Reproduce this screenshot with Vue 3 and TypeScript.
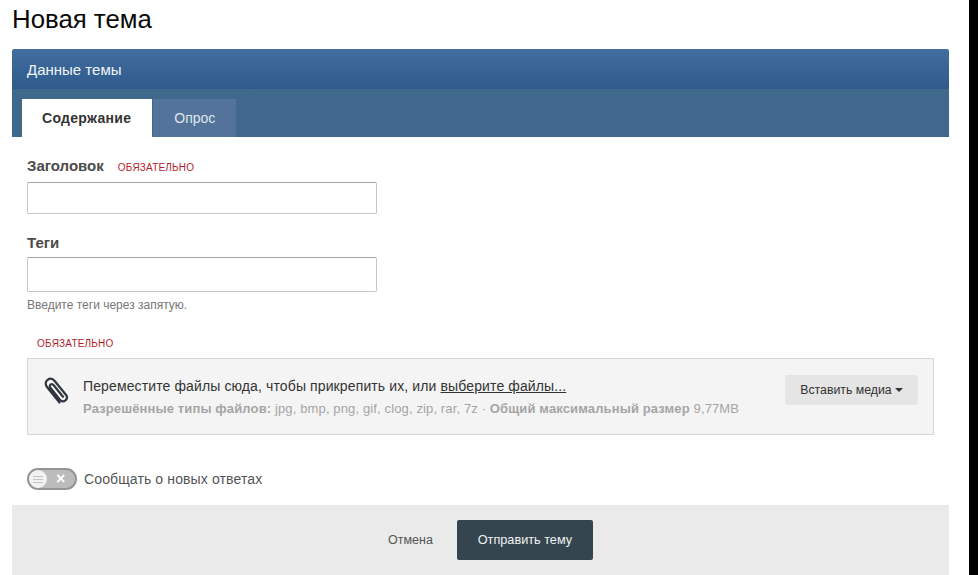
<script setup lang="ts">
const title = 'Новая тема'
</script>

<template>
  <div class="page">
    <div class="main">
      <h1 class="title">{{ title }}</h1>
      <section class="panel">
        <header class="panel-head">Данные темы</header>
        <nav class="tabs">
          <span class="tab active">Содержание</span>
          <span class="tab">Опрос</span>
        </nav>
        <div class="body">
          <div class="field first">
            <label class="label">Заголовок<span class="req">ОБЯЗАТЕЛЬНО</span></label>
            <input class="input" type="text" />
          </div>
          <div class="field second">
            <label class="label">Теги</label>
            <input class="input tall" type="text" />
            <p class="hint">Введите теги через запятую.</p>
          </div>
          <div class="req alone">ОБЯЗАТЕЛЬНО</div>
          <div class="attach">
            <svg class="clip" width="26" height="28" viewBox="0 0 26 28" fill="none" stroke="#2f3640" stroke-width="2.2" stroke-linecap="round" stroke-linejoin="round">
              <path d="M16.5 25.5 4.2 10.2C2 7.5 2.3 4.5 4.6 2.8 7 1 9.9 1.7 11.9 4.2l11 13.6c1.5 1.9 1.2 4.2-.5 5.6-1.8 1.4-4 1-5.500-.8L7.400 10.800C6.500 9.700 6.600 8.400 7.600 7.600c1-.8 2.200-.5 3.100.6l9.300 11.500" />
            </svg>
            <div class="attach-text">
              <div class="line1">Переместите файлы сюда, чтобы прикрепить их, или <a class="link">выберите файлы...</a></div>
              <div class="line2"><b>Разрешённые типы файлов:</b> jpg, bmp, png, gif, clog, zip, rar, 7z · <b>Общий максимальный размер</b> 9,77MB</div>
            </div>
            <span class="media">Вставить медиа<i class="caret"></i></span>
          </div>
          <div class="toggle-row">
            <span class="toggle">
              <span class="knob"><i></i><i></i><i></i></span>
              <span class="x">×</span>
            </span>
            <span class="toggle-label">Сообщать о новых ответах</span>
          </div>
        </div>
        <footer class="actions">
          <span class="cancel">Отмена</span>
          <span class="submit">Отправить тему</span>
        </footer>
      </section>
    </div>
    <div class="edge"></div>
  </div>
</template>

<style>
html, body { margin: 0; background: #fff; overflow: hidden; }
</style>

<style scoped>
.page { display: flex; width: 978px; height: 575px; overflow: hidden; font-family: "Liberation Sans", Arial, sans-serif; color: #333; }
.main { width: 969px; padding: 0 20px 0 12px; box-sizing: border-box; flex: none; }
.edge { flex: 1; background: #000; }
.title { margin: 0; height: 49px; font-size: 25.800px; font-weight: 400; line-height: 38px; color: #0a0a0a; }
.panel-head { height: 40px; box-sizing: border-box; padding: 0 15px; line-height: 42px; font-size: 15px; color: #f2f5f9; background: linear-gradient(#426f9f, #2f5a8c); border-radius: 2px 2px 0 0; }
.tabs { display: flex; height: 48px; box-sizing: border-box; padding: 10px 10px 0; gap: 1px; background: #40678c; }
.tab { padding: 0 21px; line-height: 38px; font-size: 14px; color: #dfe6ee; background: #53739a; }
.tab.active { padding: 0 21px 0 20px; font-weight: 700; letter-spacing: .3px; color: #333; background: #fff; }
.body { padding: 0 15px; }
.field.first { padding-top: 19px; }
.field.second { padding-top: 19px; }
.label { display: block; height: 26px; line-height: 20px; font-size: 15px; font-weight: 700; color: #4b4b4b; }
.second .label { height: 24px; }
.req { font-size: 10px; font-weight: 400; letter-spacing: .2px; color: #b01e2c; margin-left: 14px; }
.input { display: block; width: 350px; height: 32px; box-sizing: border-box; border: 1px solid #c6c6c6; border-top-color: #a5a5a5; border-radius: 2px; background: #fff; padding: 0; outline: 0; }
.input.tall { height: 35px; }
.hint { margin: 5px 0 0; font-size: 12px; line-height: 16px; color: #777; }
.req.alone { margin: 24px 0 0 10px; height: 21px; line-height: 13px; }
.attach { display: flex; align-items: center; height: 77px; box-sizing: border-box; border: 1px solid #d5d5d5; background: #f4f4f4; padding: 0 15px; position: relative; }
.clip { flex: none; margin: -11px 14px 0 0; }
.attach-text { flex: 1; margin-top: 1px; }
.line1 { font-size: 14px; line-height: 20px; letter-spacing: .12px; color: #333; }
.link { color: #333; text-decoration: underline; }
.line2 { font-size: 13px; line-height: 20px; margin-top: 3px; letter-spacing: .13px; color: #a5a5a5; }
.media { display: flex; align-items: center; justify-content: center; width: 133px; height: 30px; margin-top: -13px; border-radius: 2px; background: #e5e5e5; font-size: 12.300px; color: #333; }
.caret { width: 0; height: 0; margin-left: 3px; border: 4px solid transparent; border-top-color: #333; border-bottom: 0; }
.toggle-row { display: flex; align-items: center; margin-top: 32px; height: 24px; }
.toggle { display: flex; align-items: center; width: 50px; height: 22px; box-sizing: border-box; border-radius: 11px; border: 2px solid #949494; background: #bcbcbc; position: relative; }
.knob { display: flex; flex-direction: column; align-items: center; justify-content: center; gap: 2px; width: 18px; height: 18px; border-radius: 50%; background: #f2f2f2; }
.knob i { display: block; width: 10px; height: 1px; background: #c4c4c4; }
.x { margin-left: 9px; font-size: 16px; line-height: 18px; font-weight: 700; color: #fff; }
.toggle-label { margin-left: 7px; font-size: 14px; letter-spacing: .12px; color: #555; }
.actions { display: flex; align-items: center; justify-content: center; gap: 24px; height: 70px; margin-top: 14px; padding-left: 20px; box-sizing: border-box; background: #eaeaea; }
.cancel { font-size: 12.500px; color: #555; }
.submit { display: flex; align-items: center; justify-content: center; width: 136px; height: 40px; border-radius: 2px; background: #35454f; color: #f2f2f2; font-size: 12.700px; }
</style>
